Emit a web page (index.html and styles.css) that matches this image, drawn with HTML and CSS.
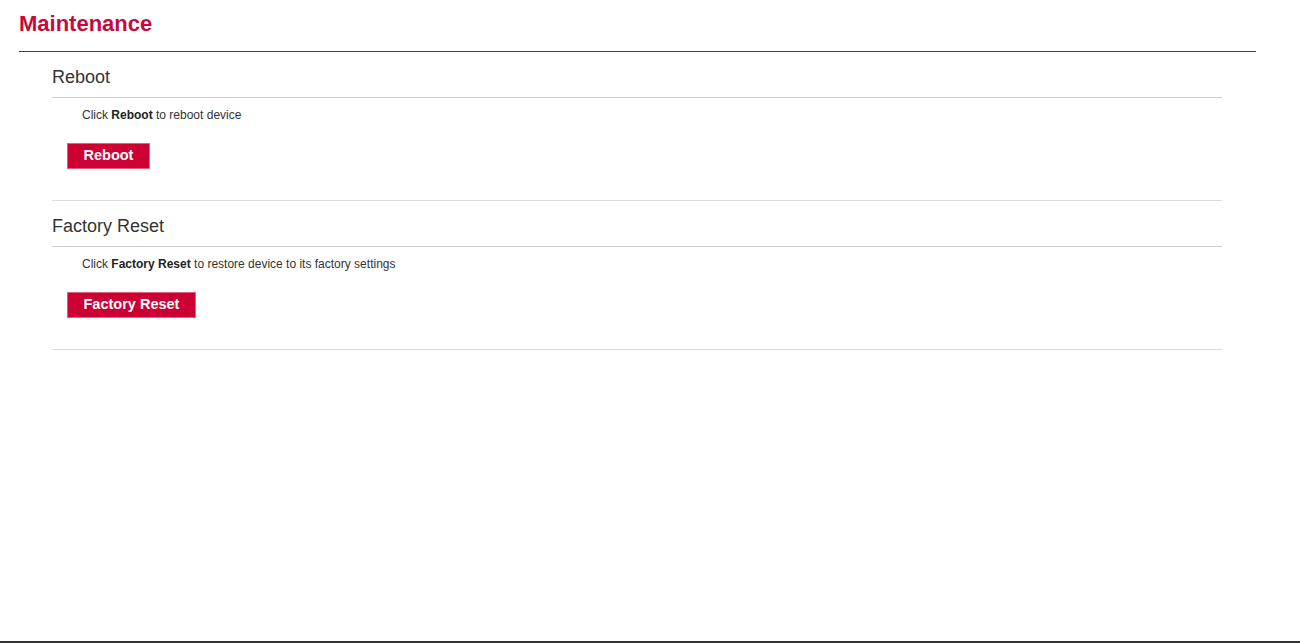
FILE: index.html
```html
<!DOCTYPE html>
<html>
<head>
<meta charset="utf-8">
<title>Maintenance</title>
<link rel="stylesheet" href="styles.css">
</head>
<body>
<div class="page">
  <h1 class="page-title">Maintenance</h1>
  <div class="title-rule"></div>
  <div class="content">
    <section class="section">
      <h2 class="section-title">Reboot</h2>
      <p class="hint">Click <b>Reboot</b> to reboot device</p>
      <button class="btn">Reboot</button>
    </section>
    <section class="section">
      <h2 class="section-title">Factory Reset</h2>
      <p class="hint">Click <b>Factory Reset</b> to restore device to its factory settings</p>
      <button class="btn">Factory Reset</button>
    </section>
  </div>
</div>
</body>
</html>
```
FILE: styles.css
```css
html, body {
  margin: 0;
  padding: 0;
  height: 100%;
}
body {
  font-family: "Liberation Sans", Arial, sans-serif;
  color: #333;
  background: #fff;
  box-sizing: border-box;
  border-bottom: 2px solid #333;
}
.page {
  padding-left: 19px;
  width: 1237px;
}
.page-title {
  margin: 0;
  padding: 11px 0 14px;
  font-size: 22px;
  line-height: 26px;
  font-weight: bold;
  color: #c70a3c;
}
.title-rule {
  height: 1px;
  background: #a8006a;
}
.content {
  margin-left: 33px;
  width: 1170px;
}
.section {
  padding-bottom: 31px;
  border-bottom: 1px solid #dcdcdc;
}
.section-title {
  margin: 0;
  padding: 14px 0 9px;
  font-size: 18px;
  line-height: 22px;
  font-weight: normal;
  color: #333;
  border-bottom: 1px solid #cfcfcf;
}
.hint {
  margin: 10px 0 0 30px;
  font-size: 12px;
  line-height: 14px;
  color: #333;
}
.hint b {
  color: #222;
}
.btn {
  display: block;
  margin: 21px 0 0 15px;
  height: 26px;
  padding: 0 15.5px 1px;
  border: 1px solid #e06080;
  background: #cc0033;
  color: #fff;
  font-family: "Liberation Sans", Arial, sans-serif;
  font-size: 14.5px;
  font-weight: bold;
  line-height: 21px;
  cursor: pointer;
}
```
